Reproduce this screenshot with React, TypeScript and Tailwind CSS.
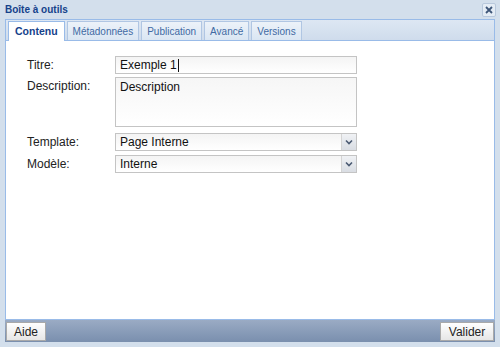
import React from "react";

const tabs = ["Contenu", "Métadonnées", "Publication", "Avancé", "Versions"];

function Field({ label, className, children }: { label: string; className?: string; children: React.ReactNode }) {
  return (
    <div className={"flex items-start " + (className ?? "")}>
      <label className="w-[88px] pt-[1px] text-[12px] leading-[16px] text-[#222]">{label}</label>
      {children}
    </div>
  );
}

function Select({ value }: { value: string }) {
  return (
    <div className="flex h-[18px] w-[242px] items-stretch border border-[#c4c4c4] bg-gradient-to-b from-[#f4f4f4] to-white">
      <span className="flex-1 pl-[4px] text-[12px] leading-[16px] text-[#111]">{value}</span>
      <span className="flex w-[15px] items-center justify-center border-l border-[#d4d4d4] bg-gradient-to-b from-[#f0f2f5] to-[#d9dde3]">
        <svg width="8" height="6" viewBox="0 0 8 6">
          <path d="M1 1.5 L4 4.5 L7 1.5" fill="none" stroke="#4a5a72" strokeWidth="1.6" />
        </svg>
      </span>
    </div>
  );
}

export default function App() {
  return (
    <div className="flex h-[347px] w-[500px] flex-col bg-[#d3dfec] font-['Liberation_Sans',Arial,sans-serif]">
      {/* header */}
      <div className="flex h-[19px] items-center justify-between pl-[5px] pr-[4px]">
        <span className="text-[10px] font-bold text-[#15428b]">Boîte à outils</span>
        <button className="flex h-[14px] w-[14px] items-center justify-center rounded-[2px] border border-[#b8c8dc] bg-[#e4ecf5]">
          <svg width="8" height="8" viewBox="0 0 8 8">
            <path d="M1 1 L7 7 M7 1 L1 7" stroke="#3d5578" strokeWidth="1.8" />
          </svg>
        </button>
      </div>

      {/* body */}
      <div className="mx-[5px] flex flex-1 flex-col border border-[#99bbe8] bg-[#dae5f2]">
        <div className="flex h-[21px] items-end gap-[2px] border-b border-[#99bbe8] bg-gradient-to-b from-[#dde7f3] to-[#cfdcec] pl-[2px]">
          {tabs.map((t, i) => (
            <div
              key={t}
              className={
                i === 0
                  ? "-mb-px flex h-[20px] items-center justify-center border border-b-0 border-[#99bbe8] bg-white px-[6px] text-[10.5px] font-bold text-[#15428b]"
                  : "flex h-[19px] items-center justify-center border border-b-0 border-[#b0c6e3] bg-gradient-to-b from-[#ecf2f9] to-[#dae6f3] px-[5px] text-[10px] text-[#416aa3]"
              }
            >
              {t}
            </div>
          ))}
        </div>

        <div className="flex flex-1 flex-col bg-white pl-[21px] pt-[15px]">
          <Field label="Titre:">
            <div className="flex h-[18px] w-[242px] items-center border border-[#c4c4c4] bg-gradient-to-b from-[#f4f4f4] to-white pl-[4px] text-[12px] text-[#111]">
              Exemple 1<span className="ml-px h-[13px] w-px bg-[#111]" />
            </div>
          </Field>
          <Field label="Description:" className="mt-[3px]">
            <div className="h-[50px] w-[242px] border border-[#c4c4c4] bg-gradient-to-b from-[#f6f6f6] to-white pl-[4px] pt-[1px] text-[12px] leading-[16px] text-[#111]">
              Description
            </div>
          </Field>
          <Field label="Template:" className="mt-[6px]">
            <Select value="Page Interne" />
          </Field>
          <Field label="Modèle:" className="mt-[4px]">
            <Select value="Interne" />
          </Field>
        </div>
      </div>

      {/* footer */}
      <div className="mx-[5px] flex h-[22px] items-center justify-between bg-gradient-to-b from-[#9aabc4] to-[#7a8fae] px-[1px]">
        <button className="h-[19px] w-[40px] border border-[#a9a9a9] bg-gradient-to-b from-white to-[#e6e6e6] text-[12px] text-[#222]">
          Aide
        </button>
        <button className="h-[19px] w-[54px] border border-[#a9a9a9] bg-gradient-to-b from-white to-[#e6e6e6] text-[12px] text-[#222]">
          Valider
        </button>
      </div>
      <div className="h-[5px]" />
    </div>
  );
}
